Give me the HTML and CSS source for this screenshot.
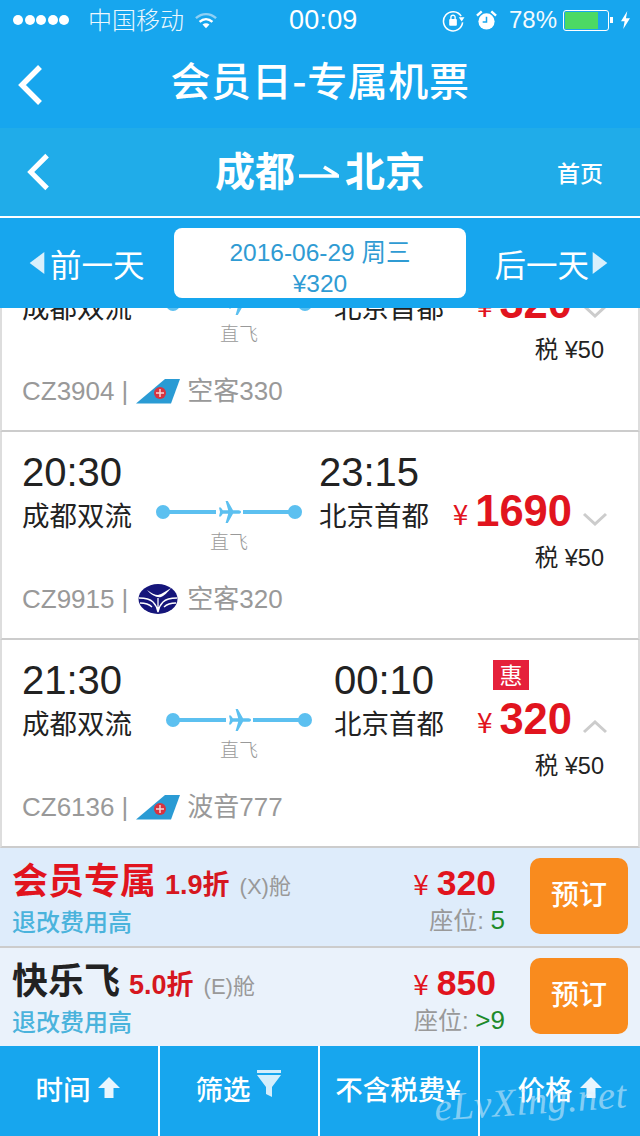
FILE: index.html
```html
<!DOCTYPE html>
<html lang="zh-CN">
<head>
<meta charset="utf-8">
<title>会员日-专属机票</title>
<link rel="stylesheet" href="styles.css">
</head>
<body>
<div class="page">
  <header class="top">
    <div class="status">
      <div class="status-left">
        <span class="dots"><i></i><i></i><i></i><i></i><i></i></span>
        <span class="carrier">中国移动</span>
        <svg class="wifi" viewBox="0 0 24 18"><path d="M1 6.500C7.500 .5 16.500 .5 23 6.500" fill="none" stroke="#8fd0f4" stroke-width="2.600"/><path d="M5 10.500c4.200-3.800 9.800-3.800 14 0" fill="none" stroke="#fff" stroke-width="2.600"/><path d="M8.200 13.300c2.200-1.800 5.400-1.800 7.600 0L12 17.500z" fill="#fff"/></svg>
      </div>
      <span class="clock">00:09</span>
      <div class="status-right">
        <svg class="lock" viewBox="0 0 24 24"><path d="M20 7.500A10 10 0 1 0 21.500 14" fill="none" stroke="#fff" stroke-width="1.600"/><path d="M17.500 8.500h6L20.500 13z" fill="#fff"/><rect x="7.500" y="10.500" width="8" height="7" rx="1" fill="#fff"/><path d="M9.300 10.500V8.700a2.200 2.200 0 0 1 4.400 0v1.800" fill="none" stroke="#fff" stroke-width="1.400"/></svg>
        <svg class="alarm" viewBox="0 0 22 22"><circle cx="11" cy="12" r="8.500" fill="#fff"/><path d="M11 7v5.500H7" fill="none" stroke="#17a6ee" stroke-width="1.600"/><path d="M1 6l5-4.500M21 6l-5-4.500" stroke="#fff" stroke-width="2.500"/></svg>
        <span class="pct">78%</span>
        <span class="battery"><span class="battery-fill"></span></span>
        <svg class="bolt" viewBox="0 0 12 20"><path d="M8 0L1 11.500h4L3.500 20 11 8H6.500z" fill="#fff"/></svg>
      </div>
    </div>
    <div class="nav">
      <svg class="back" viewBox="0 0 28 44"><path d="M24 4L6 22l18 18" fill="none" stroke="#fff" stroke-width="5.500"/></svg>
      <h1 class="nav-title">会员日-专属机票</h1>
    </div>
  </header>

  <div class="route-head">
    <svg class="back back-sub" viewBox="0 0 28 44"><path d="M24 4L6 22l18 18" fill="none" stroke="#fff" stroke-width="5.500"/></svg>
    <h2 class="route-title">成都<svg class="harpoon" viewBox="0 0 42 20"><path d="M1 14h40M26 5l13 8" fill="none" stroke="#fff" stroke-width="3.600"/></svg>北京</h2>
    <span class="home">首页</span>
  </div>

  <div class="datebar">
    <span class="day-link day-prev"><svg class="tri" viewBox="0 0 16 24"><path d="M16 0v24L0 12z" fill="#d9f0fc"/></svg>前一天</span>
    <div class="date-box">
      <span>2016-06-29 周三</span>
      <span>¥320</span>
    </div>
    <span class="day-link day-next">后一天<svg class="tri" viewBox="0 0 16 24"><path d="M0 0v24l16-12z" fill="#d9f0fc"/></svg></span>
  </div>

  <main class="list">
    <article class="card card-first">
      <div class="row">
        <div class="stop"><div class="time">19:30</div><div class="place">成都双流</div></div>
        <div class="route">
          <div class="track"><i class="dot"></i><i class="bar"></i><svg class="plane" viewBox="0 0 24 24"><path d="M23 12c0-1-1-1.800-2.500-1.800H15L9.800 1H7.600l2.600 9.200H4.800L2.800 7.500H1l1 4.500-1 4.500h1.800l2-2.700h5.400L7.600 23h2.200L15 13.800h5.500C22 13.800 23 13 23 12z"/></svg><i class="bar"></i><i class="dot"></i></div>
          <div class="direct">直飞</div>
        </div>
        <div class="stop"><div class="time">22:15</div><div class="place">北京首都</div></div>
        <div class="fare">
          <div class="badge-slot"></div>
          <div class="price"><span class="yen">¥</span><span class="amount">320</span><svg class="chev" viewBox="0 0 26 14"><path d="M2 2l11 10L24 2" fill="none" stroke="#ccc" stroke-width="3"/></svg></div>
          <div class="tax">税 ¥50</div>
        </div>
      </div>
      <div class="flight"><span>CZ3904</span><span class="sep">|</span>
        <svg class="logo" viewBox="0 0 44 30"><path d="M0 27.500L29 3h15l-9 24.500z" fill="#2a9bd4"/><circle cx="24" cy="17" r="6" fill="#d9333f"/><path d="M20 17h8M24 13v8" stroke="#f6d5d5" stroke-width="1.500"/></svg>
        <span class="craft">空客330</span></div>
    </article>

    <article class="card card-wide">
      <div class="row">
        <div class="stop"><div class="time">20:30</div><div class="place">成都双流</div></div>
        <div class="route">
          <div class="track"><i class="dot"></i><i class="bar"></i><svg class="plane" viewBox="0 0 24 24"><path d="M23 12c0-1-1-1.800-2.500-1.800H15L9.800 1H7.600l2.600 9.200H4.800L2.800 7.500H1l1 4.500-1 4.500h1.800l2-2.700h5.400L7.600 23h2.200L15 13.800h5.500C22 13.800 23 13 23 12z"/></svg><i class="bar"></i><i class="dot"></i></div>
          <div class="direct">直飞</div>
        </div>
        <div class="stop"><div class="time">23:15</div><div class="place">北京首都</div></div>
        <div class="fare">
          <div class="badge-slot"></div>
          <div class="price"><span class="yen">¥</span><span class="amount">1690</span><svg class="chev" viewBox="0 0 26 14"><path d="M2 2l11 10L24 2" fill="none" stroke="#ccc" stroke-width="3"/></svg></div>
          <div class="tax">税 ¥50</div>
        </div>
      </div>
      <div class="flight"><span>CZ9915</span><span class="sep">|</span>
        <svg class="logo" viewBox="0 0 44 30"><ellipse cx="22" cy="15" rx="19.500" ry="15" fill="#15157a"/><path d="M11 6c4 3 8 5 11 5 4-1 8-4 13-7-3 4-7 8-10 9-4 1-10-2-14-7z" fill="#fff"/><path d="M3 14c6 0 11 1 14 4 2 2 4 5 5 10M41 14c-6 0-11 1-14 4-2 2-4 5-5 10M4 19c5 0 9 1 12 4M40 19c-5 0-9 1-12 4M22 14v12" fill="none" stroke="#fff" stroke-width="1.300"/></svg>
        <span class="craft">空客320</span></div>
    </article>

    <article class="card">
      <div class="row">
        <div class="stop"><div class="time">21:30</div><div class="place">成都双流</div></div>
        <div class="route">
          <div class="track"><i class="dot"></i><i class="bar"></i><svg class="plane" viewBox="0 0 24 24"><path d="M23 12c0-1-1-1.800-2.500-1.800H15L9.800 1H7.600l2.600 9.200H4.800L2.800 7.500H1l1 4.500-1 4.500h1.800l2-2.700h5.400L7.600 23h2.200L15 13.800h5.500C22 13.800 23 13 23 12z"/></svg><i class="bar"></i><i class="dot"></i></div>
          <div class="direct">直飞</div>
        </div>
        <div class="stop"><div class="time">00:10</div><div class="place">北京首都</div></div>
        <div class="fare">
          <div class="badge-slot"><span class="badge">惠</span></div>
          <div class="price"><span class="yen">¥</span><span class="amount">320</span><svg class="chev" viewBox="0 0 26 14"><path d="M2 12L13 2l11 10" fill="none" stroke="#ccc" stroke-width="3"/></svg></div>
          <div class="tax">税 ¥50</div>
        </div>
      </div>
      <div class="flight"><span>CZ6136</span><span class="sep">|</span>
        <svg class="logo" viewBox="0 0 44 30"><path d="M0 27.500L29 3h15l-9 24.500z" fill="#2a9bd4"/><circle cx="24" cy="17" r="6" fill="#d9333f"/><path d="M20 17h8M24 13v8" stroke="#f6d5d5" stroke-width="1.500"/></svg>
        <span class="craft">波音777</span></div>
    </article>
  </main>

  <section class="cabins">
    <div class="cabin cabin-vip">
      <div class="cabin-info">
        <div class="cabin-line"><span class="cabin-name red">会员专属</span><span class="discount">1.9折</span><span class="class-code">(X)舱</span></div>
        <div class="refund">退改费用高</div>
      </div>
      <div class="cabin-price">
        <div class="cabin-amount"><span class="cabin-yen">¥</span> 320</div>
        <div class="seats">座位: <b>5</b></div>
      </div>
      <button class="book">预订</button>
    </div>
    <div class="cabin cabin-happy">
      <div class="cabin-info">
        <div class="cabin-line"><span class="cabin-name">快乐飞</span><span class="discount">5.0折</span><span class="class-code">(E)舱</span></div>
        <div class="refund">退改费用高</div>
      </div>
      <div class="cabin-price">
        <div class="cabin-amount"><span class="cabin-yen">¥</span> 850</div>
        <div class="seats">座位: <b>&gt;9</b></div>
      </div>
      <button class="book">预订</button>
    </div>
  </section>

  <nav class="tabs">
    <div class="tab">时间<svg class="tab-icon" viewBox="0 0 24 24"><path d="M12 1l11 11h-6.500v10h-9V12H1z" fill="#e8f6fe"/></svg></div>
    <div class="tab">筛选<svg class="tab-icon funnel" viewBox="0 0 24 28"><path d="M0 0h24v3H0zM0 5h24L15 17v10l-6-3v-7z" fill="#d4eefc"/></svg></div>
    <div class="tab">不含税费¥</div>
    <div class="tab">价格<svg class="tab-icon" viewBox="0 0 24 24"><path d="M12 1l11 11h-6.500v10h-9V12H1z" fill="#e8f6fe"/></svg></div>
  </nav>

  <div class="watermark">eLvXing.net</div>
</div>
</body>
</html>
```

FILE: styles.css
```css
* { box-sizing: border-box; margin: 0; padding: 0; }
html, body { width: 640px; height: 1136px; overflow: hidden; }
body { font-family: "Liberation Sans", "Noto Sans CJK SC", sans-serif; background: #fff; }
.page { position: relative; width: 640px; height: 1136px; display: flex; flex-direction: column; overflow: hidden; }

/* status + nav */
.top { height: 128px; background: #17a6ee; color: #fff; flex: none; }
.status { height: 40px; display: flex; align-items: center; justify-content: space-between; padding: 0 9px 0 13px; position: relative; }
.status-left, .status-right { display: flex; align-items: center; }
.dots { display: flex; gap: 1.500px; }
.dots i { width: 10px; height: 10px; border-radius: 50%; background: #fff; }
.carrier { font-size: 24px; margin: 1px 0 0 19px; opacity: .92; font-weight: 300; line-height: 36px; }
.wifi { width: 22px; height: 17px; margin-left: 11px; }
.clock { font-size: 27px; letter-spacing: .2px; position: absolute; left: 289px; }
.lock { width: 23px; height: 23px; }
.alarm { width: 21px; height: 21px; margin-left: 11px; }
.pct { font-size: 24px; margin-left: 12px; opacity: .95; }
.battery { width: 46px; height: 21px; margin-left: 6px; border: 1.500px solid #fff; border-radius: 3px; padding: 1px; display: block; position: relative; }
.battery::after { content: ""; position: absolute; right: -5px; top: 6px; width: 3px; height: 6px; background: #fff; }
.battery-fill { display: block; width: 78%; height: 100%; background: #4cd964; }
.bolt { width: 11px; height: 18px; margin-left: 11px; }

.nav { height: 88px; display: flex; align-items: center; justify-content: center; position: relative; padding-bottom: 10px; }
.nav .back { position: absolute; left: 16px; top: 23px; }
.back { width: 28px; height: 44px; flex: none; }
.nav-title { font-family: "Noto Sans CJK SC", sans-serif; font-size: 40px; letter-spacing: .6px; font-weight: 500; line-height: 50px; }

.route-head { height: 88px; flex: none; background: #20ace9; color: #fff; display: flex; align-items: center; justify-content: center; position: relative; padding-bottom: 6px; }
.route-head .back-sub { position: absolute; left: 25px; top: 24px; width: 26px; height: 40px; }
.route-title { font-family: "Noto Sans CJK SC", sans-serif; font-size: 40px; font-weight: 700; line-height: 50px; display: flex; align-items: center; }
.harpoon { width: 42px; height: 20px; margin: 6px 5px 0 3px; }
.home { position: absolute; right: 37px; top: 29px; font-family: "Noto Sans CJK SC", sans-serif; font-size: 23px; font-weight: 500; line-height: 30px; }

.datebar { height: 92px; flex: none; background: #17a6ee; border-top: 2px solid #fff; display: flex; align-items: center; justify-content: space-between; padding: 0 32px 0 29px; color: #fff; }
.day-link { font-family: "Noto Sans CJK SC", sans-serif; font-size: 31.500px; font-weight: 400; display: flex; align-items: center; line-height: 40px; }
.day-prev { gap: 5px; }
.day-next { gap: 3px; }
.tri { width: 16px; height: 22px; }
.date-box { width: 292px; height: 70px; background: #fff; border-radius: 8px; color: #2f9bd3; font-size: 24.500px; line-height: 31px; display: flex; flex-direction: column; align-items: center; justify-content: center; padding-top: 10px; margin-left: 1px; }

/* list */
.list { height: 540px; flex: none; overflow: hidden; background: #fff; }
.card { height: 208px; padding: 20px 30px 0 20px; background: #fff; border-left: 2px solid #ddd; border-right: 2px solid #ddd; border-bottom: 2px solid #ccc; }
.card-first { margin-top: -84px; }
.row { display: flex; align-items: flex-start; height: 121px; }
.stop { flex: none; }
.time { font-size: 40px; line-height: 40px; color: #222; }
.place { font-family: "Noto Sans CJK SC", sans-serif; font-size: 27.500px; line-height: 44px; color: #222; font-weight: 400; }
.route { width: 146px; flex: none; margin: 54px 23px 0 33px; display: flex; flex-direction: column; align-items: center; position: relative; left: 1px; }
.card-wide .route { margin: 54px 17px 0 24px; left: 0; }
.track { width: 100%; height: 12px; display: flex; align-items: center; }
.dot { width: 14px; height: 14px; border-radius: 50%; background: #5cc0f0; flex: none; }
.bar { flex: 1; height: 4px; background: #5cc0f0; margin: 0 -1px; }
.plane { width: 24px; height: 24px; fill: #5cc0f0; flex: none; margin: 0 2px 0 3px; }
.direct { font-family: "Noto Sans CJK SC", sans-serif; font-size: 19px; line-height: 28px; margin-top: 9px; color: #999; font-weight: 300; }
.fare { margin-left: auto; flex: none; display: flex; flex-direction: column; align-items: flex-start; }
.badge-slot { height: 30px; margin-bottom: 4px; padding-left: 16px; }
.badge { display: block; width: 36px; height: 30px; background: #e5203a; color: #fff; font-family: "Noto Sans CJK SC", sans-serif; font-size: 23px; line-height: 29px; text-align: center; }
.price { display: flex; align-items: center; height: 50px; color: #e1141e; }
.yen { font-family: "Noto Sans CJK SC", sans-serif; font-size: 28px; margin-right: 7px; line-height: 1; margin-top: 4px; }
.amount { font-size: 43.500px; font-weight: 700; line-height: 50px; }
.chev { width: 26px; height: 14px; margin: 16px 0 0 10px; flex: none; }
.tax { align-self: flex-end; margin: 7px 4px 0 0; font-size: 23.500px; line-height: 30px; color: #222; }
.flight { display: flex; align-items: center; height: 34px; margin-top: 9px; font-size: 26px; color: #999; }
.sep { margin: 0 8px 0 7px; }
.logo { width: 44px; height: 30px; flex: none; margin-right: 7px; }
.craft { position: relative; top: -3px; }

/* cabins */
.cabins { height: 198px; flex: none; }
.cabin { display: flex; align-items: center; padding: 0 12px; }
.cabin-vip { background: #deecfb; border-bottom: 2px solid #ccc; height: 100px; }
.cabin-happy { background: #eaf2fb; height: 98px; }
.cabin-info { flex: 1; min-width: 0; margin-top: 1px; }
.cabin-line { display: flex; align-items: baseline; line-height: 38px; }
.cabin-name { font-family: "Noto Sans CJK SC", sans-serif; font-size: 36px; font-weight: 700; color: #222; margin-right: 9px; }
.cabin-name.red { color: #e1141e; }
.discount { font-size: 27px; font-weight: 700; color: #d6171f; margin-right: 10px; }
.class-code { font-size: 22px; color: #999; }
.refund { font-family: "Noto Sans CJK SC", sans-serif; font-size: 24px; line-height: 30px; color: #4ab3dc; font-weight: 500; }
.cabin-price { display: flex; flex-direction: column; align-items: flex-end; margin-right: 25px; }
.cabin-amount { font-size: 35.500px; font-weight: 700; line-height: 44px; color: #e1141e; margin: 3px 9px 0 0; }
.cabin-yen { font-family: "Noto Sans CJK SC", sans-serif; font-size: 28px; font-weight: 400; margin-right: -2px; }
.seats { font-size: 24px; line-height: 31px; color: #999; }
.seats b { font-weight: 400; color: #1d8a2a; font-size: 26px; }
.book { width: 98px; height: 76px; flex: none; border: 0; border-radius: 10px; background: #f98b1e; color: #fff; font-family: "Noto Sans CJK SC", sans-serif; font-size: 28px; font-weight: 500; margin-top: -2px; padding-bottom: 6px; }

/* tabs */
.tabs { height: 90px; flex: none; display: grid; grid-template-columns: repeat(4, 160px); background: #17a6ee; }
.tab { display: flex; align-items: center; justify-content: center; gap: 6px; border-right: 2px solid #fff; color: #fff; font-family: "Noto Sans CJK SC", sans-serif; font-size: 27.500px; font-weight: 500; padding: 0 2px 6px 0; }
.tab:last-child { border-right: 0; padding-right: 0; }
.tab-icon { width: 24px; height: 24px; flex: none; }
.funnel { height: 28px; margin-top: -8px; }

.watermark { position: absolute; left: 434px; top: 1078px; font-family: "Liberation Serif", serif; font-style: italic; font-size: 39px; letter-spacing: .5px; color: rgba(225, 240, 250, .55); transform: rotate(-4deg); pointer-events: none; }
```
